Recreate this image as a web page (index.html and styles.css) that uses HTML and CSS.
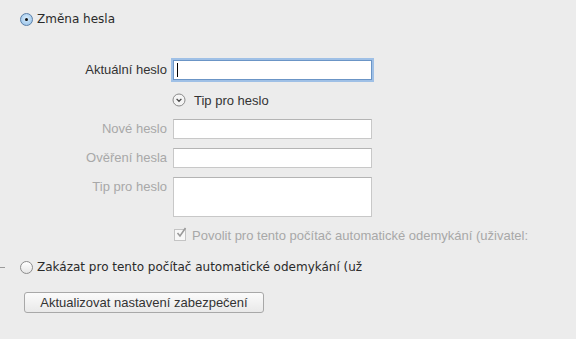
FILE: index.html
```html
<!DOCTYPE html>
<html lang="cs">
<head>
    <meta charset="UTF-8">
    <title>Změna hesla</title>
    <link rel="stylesheet" href="styles.css">
</head>
<body>
    <div class="pane">
        <label class="radio-row first">
            <span class="radio checked"></span>
            <span>Změna hesla</span>
        </label>

        <div class="form">
            <div class="label">Aktuální heslo</div>
            <div class="field focus"><span class="caret"></span></div>

            <div></div>
            <div class="tip">
                <svg width="14" height="14" viewBox="0 0 14 14">
                    <circle cx="7" cy="7" r="6" fill="#f4f4f4" stroke="#8a8a8a" stroke-width="1"/>
                    <path d="M4.6 5.9 L7 8.3 L9.4 5.9" fill="none" stroke="#444" stroke-width="1.3"/>
                </svg>
                <span>Tip pro heslo</span>
            </div>

            <div class="label off">Nové heslo</div>
            <div class="field"></div>

            <div class="label off">Ověření hesla</div>
            <div class="field"></div>

            <div class="label off">Tip pro heslo</div>
            <div class="field area"></div>

            <div></div>
            <div class="check-row">
                <span class="checkbox">
                    <svg width="12" height="12" viewBox="0 0 12 12">
                        <path d="M2.5 6 L5 9 L10.5 1" fill="none" stroke="#9a9a9a" stroke-width="1.6"/>
                    </svg>
                </span>
                <span>Povolit pro tento počítač automatické odemykání (uživatel:</span>
            </div>
        </div>

        <label class="radio-row second">
            <span class="tick"></span>
            <span class="radio"></span>
            <span>Zakázat pro tento počítač automatické odemykání (už</span>
        </label>

        <button class="btn">Aktualizovat nastavení zabezpečení</button>
    </div>
</body>
</html>
```

FILE: styles.css
```css
body {
    margin: 0;
    background: #ececec;
    font-family: "Liberation Sans", Arial, sans-serif;
    color: #333;
    overflow: hidden;
}
.pane {
    padding: 12px 0 0 20px;
    position: relative;
}
.radio-row {
    display: flex;
    align-items: center;
    gap: 4px;
    font-family: "DejaVu Sans", sans-serif;
    font-size: 12px;
    color: #2a2a2a;
    height: 14px;
    white-space: nowrap;
}
.radio {
    width: 11px;
    height: 11px;
    border: 1px solid #8c8c8c;
    border-radius: 50%;
    background: linear-gradient(#ffffff, #e6e6e6);
    position: relative;
    flex: none;
}
.radio.checked {
    border-color: #5b7fa8;
    background: radial-gradient(circle at 50% 40%, #d8ecfc, #8fbde6);
}
.radio.checked::after {
    content: "";
    position: absolute;
    left: 4px;
    top: 4px;
    width: 3px;
    height: 3px;
    border-radius: 50%;
    background: #111;
}
.form {
    display: grid;
    grid-template-columns: 147px 200px;
    column-gap: 5px;
    margin-top: 34px;
    font-size: 13px;
}
.label {
    text-align: right;
    line-height: 20px;
    color: #333;
    white-space: nowrap;
}
.label.off {
    color: #a8a8a8;
}
.field {
    height: 18px;
    border: 1px solid #c8c8c8;
    border-top-color: #b4b4b4;
    background: #fff;
    margin-bottom: 9px;
    margin-left: 1px;
}
.field.focus {
    border-color: #6b95c6;
    box-shadow: 0 0 0 2px #9fc0e6;
    margin-bottom: 0;
    position: relative;
}
.caret {
    position: absolute;
    left: 3px;
    top: 2px;
    width: 1px;
    height: 14px;
    background: #000;
}
.field.area {
    height: 38px;
    margin-bottom: 0;
}
.tip {
    display: flex;
    align-items: center;
    gap: 8px;
    height: 20px;
    margin: 10px 0 9px 0;
    color: #333;
}
.check-row {
    display: flex;
    align-items: center;
    gap: 6px;
    margin: 11px 0 0 2px;
    color: #a8a8a8;
    height: 14px;
    white-space: nowrap;
}
.checkbox {
    width: 10px;
    height: 10px;
    border: 1px solid #c4c4c4;
    background: #f8f8f8;
    position: relative;
    flex: none;
}
.checkbox svg {
    position: absolute;
    left: 0;
    top: -3px;
}
.radio-row.second {
    margin-top: 18px;
    position: relative;
}
.tick {
    position: absolute;
    left: -20px;
    top: 7px;
    width: 5px;
    height: 1px;
    background: #9a9a9a;
}
.btn {
    display: block;
    margin: 18px 0 0 4px;
    width: 240px;
    height: 21px;
    border: 1px solid #a8a8a8;
    border-radius: 3px;
    background: linear-gradient(#fbfbfb, #e9e9e9);
    font-family: "Liberation Sans", Arial, sans-serif;
    font-size: 13px;
    color: #333;
    padding: 0;
    text-align: center;
}
```
